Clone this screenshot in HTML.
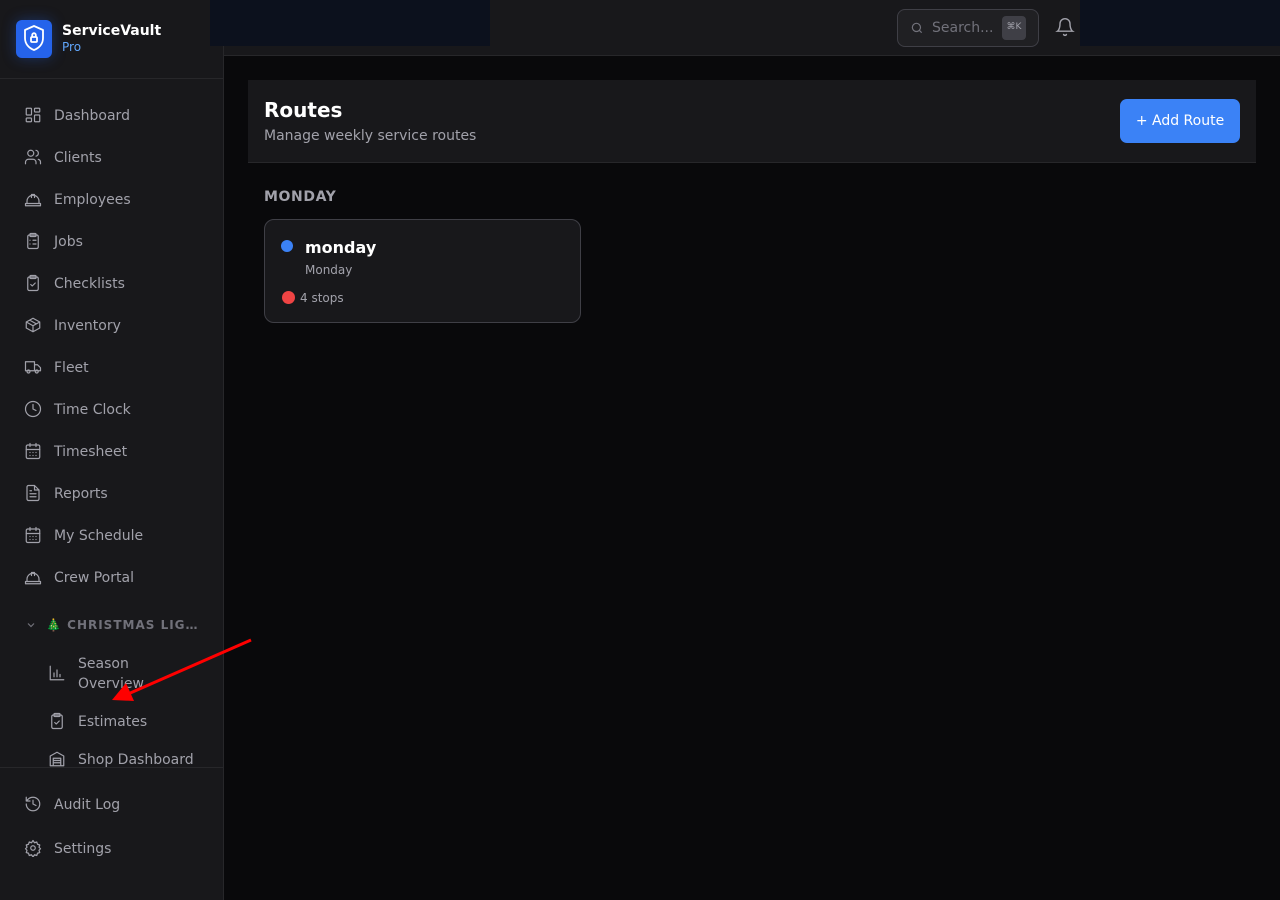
<!DOCTYPE html>
<html><head><meta charset="utf-8"><style>
*{box-sizing:border-box;margin:0;padding:0}
body{width:1280px;height:900px;background:#09090b;font-family:"DejaVu Sans","Liberation Sans",sans-serif;color:#e4e4e7;position:relative;overflow:hidden}
.sb{position:absolute;left:0;top:0;width:224px;height:900px;background:#18181b;border-right:1px solid #27272a}
.logo{position:absolute;left:16px;top:20px;width:36px;height:38px;background:#2563eb;border-radius:6px;box-shadow:0 0 14px rgba(37,99,235,.35)}
.brand{position:absolute;left:62px;top:23px;font-weight:bold;font-size:14px;color:#fff}
.pro{position:absolute;left:62px;top:40px;font-size:12px;color:#60a5fa}
.hr{position:absolute;left:0;width:223px;height:1px;background:#27272a}
.it{position:absolute;left:24px;height:20px;display:flex;align-items:center;font-size:14px;color:#a1a1aa}
.it svg{width:18px;height:18px;min-width:18px;flex-shrink:0;margin:-2px 12px 0 0;stroke:#a1a1aa;fill:none;stroke-width:1.6;stroke-linecap:round;stroke-linejoin:round}
.top{position:absolute;left:224px;top:0;right:0;height:56px;background:#18181b;border-bottom:1px solid #27272a}
.blk{position:absolute;top:0;height:46px;background:#0c111d;z-index:5}
</style></head><body>
<div class="top"></div>
<div class="blk" style="left:210px;width:280px"></div>
<div class="blk" style="left:1080px;width:200px"></div>
<div style="position:absolute;left:897px;top:9px;width:142px;height:38px;border:1px solid #3f3f46;border-radius:8px;background:#202023"></div>
<svg style="position:absolute;left:910px;top:21px" width="14" height="14" viewBox="0 0 24 24" fill="none" stroke="#71717a" stroke-width="2"><circle cx="11" cy="11" r="7"/><path d="M20 20l-4-4"/></svg>
<div style="position:absolute;left:932px;top:20px;font-size:14px;color:#71717a">Search...</div>
<div style="position:absolute;left:1002px;top:16px;width:24px;height:24px;background:#3f3f46;border-radius:4px;font-size:9px;color:#a1a1aa;text-align:center;line-height:22px">⌘K</div>
<svg style="position:absolute;left:1055px;top:17px" width="20" height="20" viewBox="0 0 24 24" fill="none" stroke="#a1a1aa" stroke-width="1.7" stroke-linecap="round"><path d="M6 8a6 6 0 0112 0c0 7 3 9 3 9H3s3-2 3-9"/><path d="M10.3 21a1.9 1.9 0 003.4 0"/></svg>

<div class="sb">
<div class="logo"><svg width="36" height="38" viewBox="0 0 36 38" fill="none" stroke="#fff" stroke-width="1.8" stroke-linejoin="round"><path d="M18 6l9 4v8c0 6-4 10-9 12-5-2-9-6-9-12v-8z"/><rect x="15" y="17" width="6" height="5" rx="1"/><path d="M16.2 17v-2a1.8 1.8 0 013.6 0v2"/></svg></div>
<div class="brand">ServiceVault</div><div class="pro">Pro</div>
<div class="hr" style="top:78px"></div>
<div class="it" style="top:106px"><svg viewBox="0 0 24 24"><rect x="3" y="3" width="7" height="9" rx="1"/><rect x="14" y="3" width="7" height="5" rx="1"/><rect x="14" y="12" width="7" height="9" rx="1"/><rect x="3" y="16" width="7" height="5" rx="1"/></svg>Dashboard</div>
<div class="it" style="top:148px"><svg viewBox="0 0 24 24"><circle cx="9" cy="7" r="4"/><path d="M2 21v-2a4 4 0 014-4h6a4 4 0 014 4v2M16 3.1a4 4 0 010 7.8M22 21v-2a4 4 0 00-3-3.9"/></svg>Clients</div>
<div class="it" style="top:190px"><svg viewBox="0 0 24 24"><path d="M2 18h20v3H2zM4 18v-3a8 8 0 0116 0v3M10 10V6h4v4"/></svg>Employees</div>
<div class="it" style="top:232px"><svg viewBox="0 0 24 24"><rect x="5" y="4" width="14" height="18" rx="2"/><rect x="8" y="2" width="8" height="4" rx="1"/><path d="M12 11h4M12 16h4M8 11h.01M8 16h.01"/></svg>Jobs</div>
<div class="it" style="top:274px"><svg viewBox="0 0 24 24"><rect x="5" y="4" width="14" height="18" rx="2"/><rect x="8" y="2" width="8" height="4" rx="1"/><path d="M9 14l2 2 4-4"/></svg>Checklists</div>
<div class="it" style="top:316px"><svg viewBox="0 0 24 24"><path d="M21 8l-9-5-9 5v8l9 5 9-5zM3 8l9 5 9-5M12 13v8M7.5 5.5l9 5"/></svg>Inventory</div>
<div class="it" style="top:358px"><svg viewBox="0 0 24 24"><path d="M2 5h12v12H2zM14 9h4l4 4v4h-8"/><circle cx="6" cy="18" r="2"/><circle cx="17" cy="18" r="2"/></svg>Fleet</div>
<div class="it" style="top:400px"><svg viewBox="0 0 24 24"><circle cx="12" cy="12" r="10"/><path d="M12 6v6l4 2"/></svg>Time Clock</div>
<div class="it" style="top:442px"><svg viewBox="0 0 24 24"><rect x="3" y="4" width="18" height="18" rx="2"/><path d="M16 2v4M8 2v4M3 10h18M8 14h.01M12 14h.01M16 14h.01M8 18h.01M12 18h.01M16 18h.01"/></svg>Timesheet</div>
<div class="it" style="top:484px"><svg viewBox="0 0 24 24"><path d="M14 2H6a2 2 0 00-2 2v16a2 2 0 002 2h12a2 2 0 002-2V8zM14 2v6h6M8 13h8M8 17h8M8 9h2"/></svg>Reports</div>
<div class="it" style="top:526px"><svg viewBox="0 0 24 24"><rect x="3" y="4" width="18" height="18" rx="2"/><path d="M16 2v4M8 2v4M3 10h18M8 14h.01M12 14h.01M16 14h.01M8 18h.01M12 18h.01M16 18h.01"/></svg>My Schedule</div>
<div class="it" style="top:568px"><svg viewBox="0 0 24 24"><path d="M2 18h20v3H2zM4 18v-3a8 8 0 0116 0v3M10 10V6h4v4"/></svg>Crew Portal</div>
<svg style="position:absolute;left:25px;top:619px" width="12" height="12" viewBox="0 0 24 24" fill="none" stroke="#71717a" stroke-width="2.4"><path d="M6 9l6 6 6-6"/></svg>
<div style="position:absolute;left:46px;top:618px;font-size:12px;font-weight:bold;letter-spacing:1px;color:#71717a"><span style="color:#16a34a">🎄</span> CHRISTMAS LIG…</div>
<div class="it" style="top:654px;left:48px;height:40px;line-height:20px"><svg viewBox="0 0 24 24"><path d="M3 3v18h18M8 17v-5M12 17V8M16 17v-3"/></svg>Season<br>Overview</div>
<div class="it" style="top:712px;left:48px"><svg viewBox="0 0 24 24"><rect x="5" y="4" width="14" height="18" rx="2"/><rect x="8" y="2" width="8" height="4" rx="1"/><path d="M9 14l2 2 4-4"/></svg>Estimates</div>
<div class="it" style="top:750px;left:48px"><svg viewBox="0 0 24 24"><path d="M3 21V8l9-5 9 5v13zM7 21V11h10v10M7 14h10M7 17h10"/></svg>Shop Dashboard</div>
<div style="position:absolute;left:0;top:767px;width:223px;height:133px;background:#18181b;border-top:1px solid #27272a"></div>
<div class="it" style="top:795px"><svg viewBox="0 0 24 24"><path d="M3 12a9 9 0 109-9 9.7 9.7 0 00-6.7 2.7L3 8M3 3v5h5M12 7v5l4 2"/></svg>Audit Log</div>
<div class="it" style="top:839px"><svg viewBox="0 0 24 24"><circle cx="12" cy="12" r="3"/><path d="M12 2l2 3 3-1 1 3 3 1-1 3 2 2-2 2 1 3-3 1-1 3-3-1-2 3-2-3-3 1-1-3-3-1 1-3-2-2 2-2-1-3 3-1 1-3 3 1z"/></svg>Settings</div>
</div>

<div style="position:absolute;left:248px;top:80px;width:1008px;height:83px;background:#18181b;border-bottom:1px solid #27272a"></div>
<div style="position:absolute;left:264px;top:98px;font-size:20px;font-weight:bold;color:#fff">Routes</div>
<div style="position:absolute;left:264px;top:128px;font-size:14px;color:#a1a1aa">Manage weekly service routes</div>
<div style="position:absolute;left:1120px;top:99px;width:120px;height:44px;background:#3b82f6;border-radius:7px;color:#fff;font-size:14px;text-align:center;line-height:45px">+ Add Route</div>
<div style="position:absolute;left:264px;top:189px;font-size:14px;font-weight:bold;letter-spacing:0.6px;color:#a1a1aa">MONDAY</div>
<div style="position:absolute;left:264px;top:219px;width:317px;height:104px;background:#18181b;border:1px solid #3f3f46;border-radius:10px"></div>
<div style="position:absolute;left:281px;top:240px;width:12px;height:12px;border-radius:50%;background:#3b82f6"></div>
<div style="position:absolute;left:305px;top:238px;font-size:16px;font-weight:bold;color:#fff">monday</div>
<div style="position:absolute;left:305px;top:263px;font-size:12px;color:#a1a1aa">Monday</div>
<div style="position:absolute;left:282px;top:291px;width:13px;height:13px;border-radius:50%;background:#ef4444"></div>
<div style="position:absolute;left:300px;top:291px;font-size:12px;color:#a1a1aa">4 stops</div>

<svg style="position:absolute;left:0;top:0;z-index:9" width="1280" height="900"><line x1="251" y1="640" x2="128" y2="694" stroke="#f00" stroke-width="3"/><polygon points="112,700 126,683 134,701" fill="#f00"/></svg>
</body></html>
